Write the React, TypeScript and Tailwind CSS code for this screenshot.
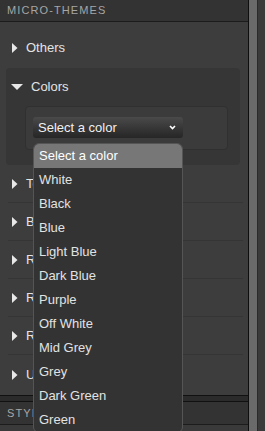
const colors = [
  'Select a color',
  'White',
  'Black',
  'Blue',
  'Light Blue',
  'Dark Blue',
  'Purple',
  'Off White',
  'Mid Grey',
  'Grey',
  'Dark Green',
  'Green',
];

const rows = ['Text', 'Buttons', 'Reset', 'Regions', 'Responsive', 'Utilities'];

const Caret = () => (
  <svg width="6" height="10" viewBox="0 0 6 10" className="shrink-0">
    <polygon points="0,0 5.5,5 0,10" fill="#e8e8e8" />
  </svg>
);

const CaretDown = () => (
  <svg width="12" height="6" viewBox="0 0 12 6" className="shrink-0">
    <polygon points="0,0 12,0 6,6" fill="#e8e8e8" />
  </svg>
);

const App = () => {
  return (
    <div
      className="relative flex w-[265px] h-[431px] overflow-hidden bg-[#3a3a3a]"
      style={{ fontFamily: '"Liberation Sans", Arial, sans-serif' }}
    >
      <div className="flex flex-col w-[248px]">
        <div className="flex items-center h-[22px] px-[7px] bg-[#333333] border-b border-[#1c1c1c] text-[11px] tracking-[1.1px] text-[#a6a6a6]">
          MICRO-THEMES
        </div>

        <div className="flex flex-col h-[373px] bg-[#3d3d3d]">
          <div className="flex items-center gap-[8px] h-[46px] pt-[6px] pl-[12px] text-[13px] text-[#e4e4e4]">
            <Caret />
            <span>Others</span>
          </div>

          <div className="flex flex-col ml-[6px] w-[234px] h-[97px] bg-[#363636] rounded">
            <div className="flex items-center gap-[8px] h-[38px] pl-[5px] text-[13px] text-[#e4e4e4]">
              <CaretDown />
              <span>Colors</span>
            </div>
            <div className="ml-[19px] w-[203px] h-[44px] pt-[10px] pl-[7px] bg-[#3b3b3b] border border-[#303030] rounded">
              <div className="flex items-center justify-between w-[150px] h-[21px] pl-[5px] pr-[7px] rounded-[3px] bg-gradient-to-b from-[#4a4a4a] to-[#262626] text-[13px] text-[#f0f0f0]">
                <span>Select a color</span>
                <svg width="7" height="5" viewBox="0 0 7 5">
                  <polyline points="1,1 3.5,3.5 6,1" fill="none" stroke="#ffffff" strokeWidth="1.6" />
                </svg>
              </div>
            </div>
          </div>

          {rows.map((r, i) => (
            <div
              key={r}
              className={
                i === rows.length - 1
                  ? 'flex items-center gap-[8px] flex-1 ml-[8px] mr-[5px] pl-[4px] text-[13px] text-[#e4e4e4]'
                  : 'flex items-center gap-[8px] h-[38px] ml-[8px] mr-[5px] pl-[4px] border-b border-[#353535] text-[13px] text-[#e4e4e4]'
              }
            >
              <Caret />
              <span>{r}</span>
            </div>
          ))}
        </div>

        <div className="h-[7px] bg-[#2b2b2b] border-y border-[#111111]" />
        <div className="flex items-center h-[23px] px-[7px] bg-[#333333] border-b border-[#1c1c1c] text-[11px] tracking-[1.1px] text-[#a6a6a6]">
          STYLES
        </div>
        <div className="flex-1 bg-[#3a3a3a]" />
      </div>

      <div className="w-px bg-[#0e0e0e]" />
      <div className="w-[8px] bg-[#6a6a6a]" />
      <div className="w-px bg-[#2a2a2a]" />
      <div className="flex-1 bg-[#3a3a3a]" />

      <ul className="absolute left-[33px] top-[143px] w-[150px] bg-[#333333] border border-[#555555] rounded-md overflow-hidden text-[13px]">
        {colors.map((c, i) => (
          <li
            key={c}
            className={
              i === 0
                ? 'flex items-center h-[24px] pl-[5px] bg-[#777777] text-[#ffffff]'
                : 'flex items-center h-[24px] pl-[5px] text-[#e2e2e2]'
            }
          >
            {c}
          </li>
        ))}
      </ul>
    </div>
  );
};

export default App;
